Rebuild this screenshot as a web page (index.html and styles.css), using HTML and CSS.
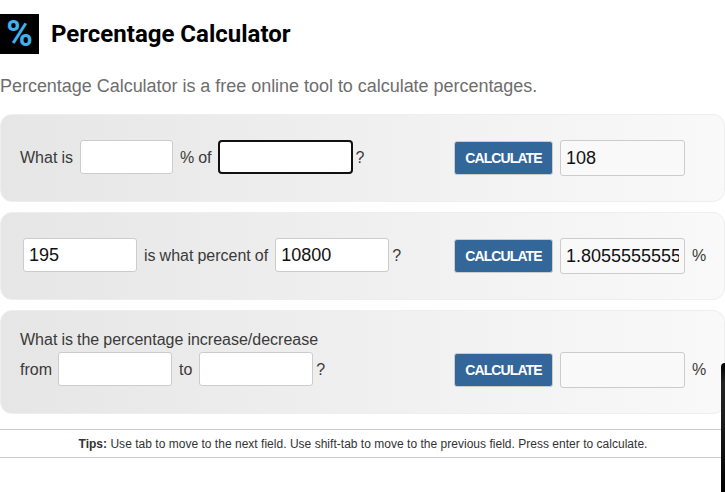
FILE: index.html
```html
<!DOCTYPE html>
<html lang="en">
<head>
<meta charset="utf-8">
<title>Percentage Calculator</title>
<link rel="stylesheet" href="styles.css">
</head>
<body>
<header class="title">
  <div class="logo">%</div>
  <h1>Percentage Calculator</h1>
</header>
<p class="intro">Percentage Calculator is a free online tool to calculate percentages.</p>
<form class="panel">
  <div class="question">
    <div class="line">
      <span>What is</span><input class="field short" type="text"><span>% of</span><input class="field focused" type="text"><span class="mark">?</span>
    </div>
  </div>
  <div class="answer"><button type="button" class="calc">CALCULATE</button><input class="field result" type="text" value="108"></div>
</form>
<form class="panel">
  <div class="question inset">
    <div class="line">
      <input class="field mid" type="text" value="195"><span>is what percent of</span><input class="field mid" type="text" value="10800"><span class="mark">?</span>
    </div>
  </div>
  <div class="answer"><button type="button" class="calc">CALCULATE</button><input class="field result" type="text" value="1.80555555555556"><span>%</span></div>
</form>
<form class="panel tall">
  <div class="question stacked">
    <div class="lead">What is the percentage increase/decrease</div>
    <div class="line">
      <span class="from">from</span><input class="field mid" type="text"><span>to</span><input class="field mid" type="text"><span class="mark">?</span>
    </div>
  </div>
  <div class="answer low"><button type="button" class="calc">CALCULATE</button><input class="field result" type="text"><span>%</span></div>
</form>
<p class="tips"><b>Tips:</b> Use tab to move to the next field. Use shift-tab to move to the previous field. Press enter to calculate.</p>
<div class="edge"></div>
</body>
</html>
```
FILE: styles.css
```css
* { box-sizing: border-box; }
html, body { height: 100%; }
body {
  margin: 0;
  overflow: hidden;
  background: #fff;
  color: #3a3a3a;
  font-family: "Liberation Sans", Arial, sans-serif;
  font-size: 16px;
  word-spacing: -0.4px;
  position: relative;
}
.title {
  display: flex;
  align-items: center;
  gap: 12px;
  padding-top: 14px;
  height: 54px;
}
.logo {
  width: 39px;
  height: 40px;
  background: #000;
  color: #3fb1ee;
  font-family: Roboto, sans-serif;
  font-size: 36px;
  font-weight: 700;
  line-height: 40px;
  text-align: center;
}
h1 {
  margin: 0;
  color: #000;
  font-family: Roboto, sans-serif;
  font-size: 24px;
  font-weight: 700;
  line-height: 40px;
  word-spacing: 0;
}
.intro {
  margin: 22px 0 17px;
  color: #6e6e6e;
  font-size: 18px;
  line-height: 21px;
  letter-spacing: -0.03px;
  word-spacing: 0;
}
.panel {
  display: flex;
  justify-content: space-between;
  height: 88px;
  margin-bottom: 10px;
  padding-left: 19px;
  border: 1px solid #eee;
  border-radius: 12px;
  background: linear-gradient(to right, #e6e6e6, #f9f9f9);
}
.panel.tall { height: 104px; margin-bottom: 15px; }
.question { display: flex; flex-direction: column; justify-content: center; padding-bottom: 2px; }
.question.inset { margin-left: 3px; }
.question.stacked { justify-content: flex-start; padding: 17px 0 0; }
.lead { line-height: 24px; height: 24px; }
.line { display: flex; align-items: center; gap: 7px; }
.line span { padding-top: 2px; }
.line .from { margin-right: -1px; }
.mark { margin-left: -4px; }
.field {
  height: 34px;
  padding: 0 5px;
  border: 1px solid #ccc;
  border-radius: 3px;
  background: #fff;
  color: #111;
  font-family: "Liberation Sans", Arial, sans-serif;
  font-size: 18px;
  outline: none;
}
.field.short { width: 93px; }
.field.mid { width: 114px; }
.field.focused { width: 135px; margin-left: -1px; border: 2px solid #111; border-radius: 4px; }
.answer {
  display: flex;
  align-items: center;
  gap: 7px;
  width: 270px;
  height: 100%;
}
.answer.low { padding-top: 16px; }
.calc {
  width: 99px;
  height: 34px;
  padding: 0;
  border: 1px solid #ccc;
  border-radius: 3px;
  background: #336699;
  color: #fff;
  font-family: "Liberation Sans", Arial, sans-serif;
  font-size: 14px;
  font-weight: 700;
  letter-spacing: -0.9px;
}
.field.result { width: 125px; height: 36px; background: #f9f9f9; }
.tips {
  margin: 0;
  height: 29px;
  padding-left: 1px;
  border-top: 1px solid #ccc;
  border-bottom: 1px solid #ccc;
  color: #333;
  font-size: 12px;
  line-height: 28px;
  letter-spacing: 0.02px;
  word-spacing: 0;
  text-align: center;
}
.edge {
  position: absolute;
  right: 0;
  top: 363px;
  bottom: 0;
  width: 4px;
  border-top-left-radius: 4px;
  background: linear-gradient(to bottom, #000, #222 20px, #1a1a1a 60px, #000);
}
```
